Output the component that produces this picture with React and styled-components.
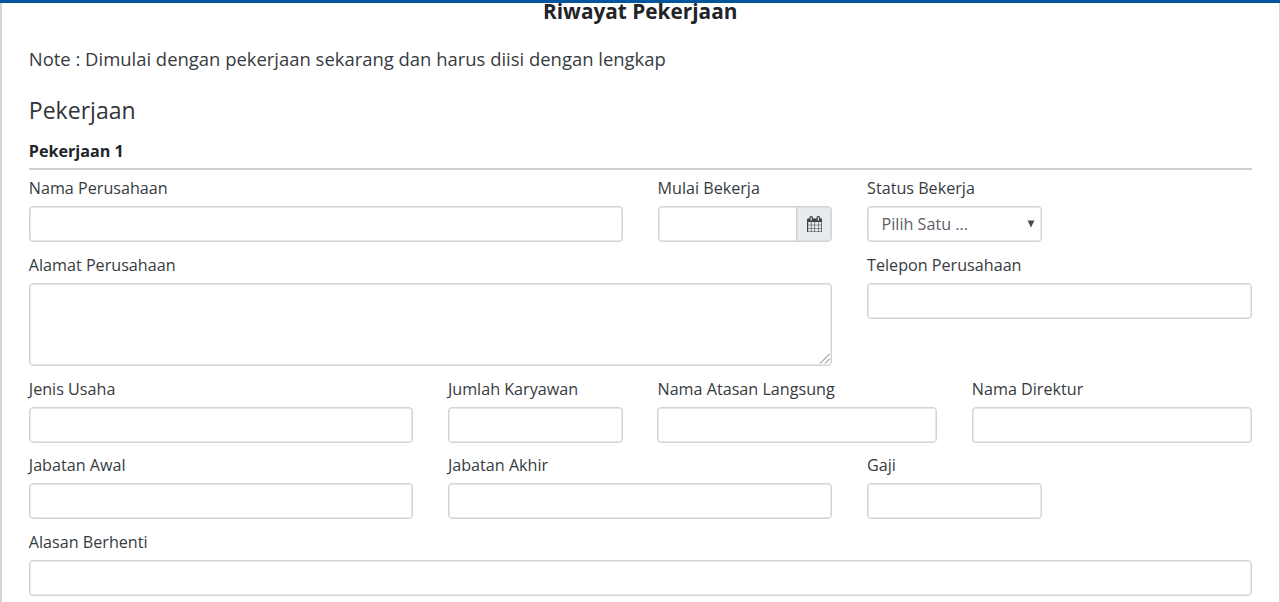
import React from "react";
import styled, { createGlobalStyle } from "styled-components";

const GlobalStyle = createGlobalStyle`
  *, *::before, *::after { box-sizing: border-box; }
  html, body, #root { height: 100%; }
  body {
    margin: 0;
    overflow: hidden;
    background: #fff;
    color: #212529;
    font-family: "Open Sans", "Noto Sans", sans-serif;
  }
`;

const Page = styled.div`
  height: 602px;
  border-top: 3px solid #04559b;
`;

const Panel = styled.main`
  height: 599px;
  border: solid #d6d6d8;
  border-width: 0 1px 0 2px;
  padding: 0 27.4px 0 26.8px;
`;

const Title = styled.h1`
  margin: 0;
  font-size: 20.8px;
  line-height: 16px;
  font-weight: 700;
  text-align: center;
`;

const Note = styled.p`
  margin: 24px 0 0;
  font-size: 18.46px;
  line-height: 32px;
  color: #373b3f;
`;

const Section = styled.h2`
  margin: 19px 0 0;
  font-size: 23.05px;
  line-height: 32px;
  font-weight: 400;
  color: #30343a;
`;

const EntryTitle = styled.h3`
  margin: 12px 0 0;
  height: 32px;
  font-size: 16.15px;
  line-height: 26px;
  font-weight: 700;
  border-bottom: 2px solid #cfcfd0;
`;

const Row = styled.div`
  display: grid;
  grid-template-columns: repeat(12, minmax(0, 1fr));
  column-gap: 34.6px;
  height: ${(p) => p.$height || 76.8}px;
`;

const Field = styled.div`
  grid-column: ${(p) => p.$start} / span ${(p) => p.$span};
  display: flex;
  flex-direction: column;
`;

const Label = styled.label`
  height: 36px;
  padding-top: 5px;
  font-size: 16.15px;
  line-height: 26px;
  white-space: nowrap;
  color: #373b3f;
`;

const Control = styled.div`
  display: flex;
  align-items: stretch;
  height: 36px;
  border: 1px solid #ced4da;
  box-shadow: inset 0 0 0 0.5px #ced4da;
  border-radius: 4px;
  overflow: hidden;
  background: #fff;
`;

const Input = styled.input`
  flex: 1;
  min-width: 0;
  border: 0;
  outline: 0;
  padding: 0 13px;
  background: transparent;
  font: 16.15px "Open Sans", sans-serif;
  color: #495057;
`;

const AddOn = styled.span`
  width: 35px;
  display: flex;
  align-items: center;
  justify-content: center;
  border-left: 1px solid #ced4da;
  background: #e9ecef;
  box-shadow: inset 0 0 0 0.5px #ced4da;
  color: #3d434a;
`;

const SelectBox = styled.div`
  flex: 1;
  display: flex;
  align-items: center;
  justify-content: space-between;
  padding: 0 6.5px 0 13.5px;
  font-size: 16.15px;
  color: #5b6168;
`;

const Area = styled.div`
  height: 83px;
  display: flex;
  align-items: flex-end;
  justify-content: flex-end;
  border: 1px solid #ced4da;
  box-shadow: inset 0 0 0 0.5px #ced4da;
  border-radius: 4px;
`;

const CalendarIcon = () => (
  <svg width="15.5" height="16.7" viewBox="0 0 1664 1792" fill="currentColor">
    <path d="M128 1664h288v-288h-288v288zm352 0h320v-288h-320v288zm-352-352h288v-320h-288v320zm352 0h320v-320h-320v320zm-352-384h288v-288h-288v288zm736 736h320v-288h-320v288zm-384-736h320v-288h-320v288zm768 736h288v-288h-288v288zm-384-352h320v-320h-320v320zm-352-864v-288q0-13-9.5-22.5t-22.5-9.5h-64q-13 0-22.5 9.5t-9.5 22.5v288q0 13 9.5 22.5t22.5 9.5h64q13 0 22.5-9.5t9.5-22.5zm736 864h288v-320h-288v320zm-384-384h320v-288h-320v288zm384 0h288v-288h-288v288zm32-480v-288q0-13-9.5-22.5t-22.5-9.5h-64q-13 0-22.5 9.5t-9.5 22.5v288q0 13 9.5 22.5t22.5 9.5h64q13 0 22.5-9.5t9.5-22.5zm384-64v1280q0 52-38 90t-90 38h-1408q-52 0-90-38t-38-90v-1280q0-52 38-90t90-38h128v-96q0-66 47-113t113-47h64q66 0 113 47t47 113v96h384v-96q0-66 47-113t113-47h64q66 0 113 47t47 113v96h128q52 0 90 38t38 90z" />
  </svg>
);

const ArrowIcon = () => (
  <svg width="8" height="8" viewBox="0 0 8 8" fill="#454a50">
    <path d="M0.6 0.6h6.8L4 7.4z" />
  </svg>
);

const GripIcon = () => (
  <svg width="12" height="12" viewBox="0 0 12 12" fill="none" stroke="#777" strokeWidth="1">
    <path d="M1 10.5L10.5 1M6 10.5L10.5 6" />
  </svg>
);

const TextField = ({ label, start, span }) => (
  <Field $start={start} $span={span}>
    <Label>{label}</Label>
    <Control>
      <Input aria-label={label} />
    </Control>
  </Field>
);

export default function App() {
  return (
    <>
      <GlobalStyle />
      <Page>
        <Panel>
          <Title>Riwayat Pekerjaan</Title>
          <Note>Note : Dimulai dengan pekerjaan sekarang dan harus diisi dengan lengkap</Note>
          <Section>Pekerjaan</Section>
          <EntryTitle>Pekerjaan 1</EntryTitle>
          <Row>
            <TextField label="Nama Perusahaan" start={1} span={6} />
            <Field $start={7} $span={2}>
              <Label>Mulai Bekerja</Label>
              <Control>
                <Input aria-label="Mulai Bekerja" />
                <AddOn>
                  <CalendarIcon />
                </AddOn>
              </Control>
            </Field>
            <Field $start={9} $span={2}>
              <Label>Status Bekerja</Label>
              <Control>
                <SelectBox>
                  Pilih Satu ...
                  <ArrowIcon />
                </SelectBox>
              </Control>
            </Field>
          </Row>
          <Row $height={123.8}>
            <Field $start={1} $span={8}>
              <Label>Alamat Perusahaan</Label>
              <Area>
                <GripIcon />
              </Area>
            </Field>
            <TextField label="Telepon Perusahaan" start={9} span={4} />
          </Row>
          <Row>
            <TextField label="Jenis Usaha" start={1} span={4} />
            <TextField label="Jumlah Karyawan" start={5} span={2} />
            <TextField label="Nama Atasan Langsung" start={7} span={3} />
            <TextField label="Nama Direktur" start={10} span={3} />
          </Row>
          <Row>
            <TextField label="Jabatan Awal" start={1} span={4} />
            <TextField label="Jabatan Akhir" start={5} span={4} />
            <TextField label="Gaji" start={9} span={2} />
          </Row>
          <Row>
            <TextField label="Alasan Berhenti" start={1} span={12} />
          </Row>
        </Panel>
      </Page>
    </>
  );
}
